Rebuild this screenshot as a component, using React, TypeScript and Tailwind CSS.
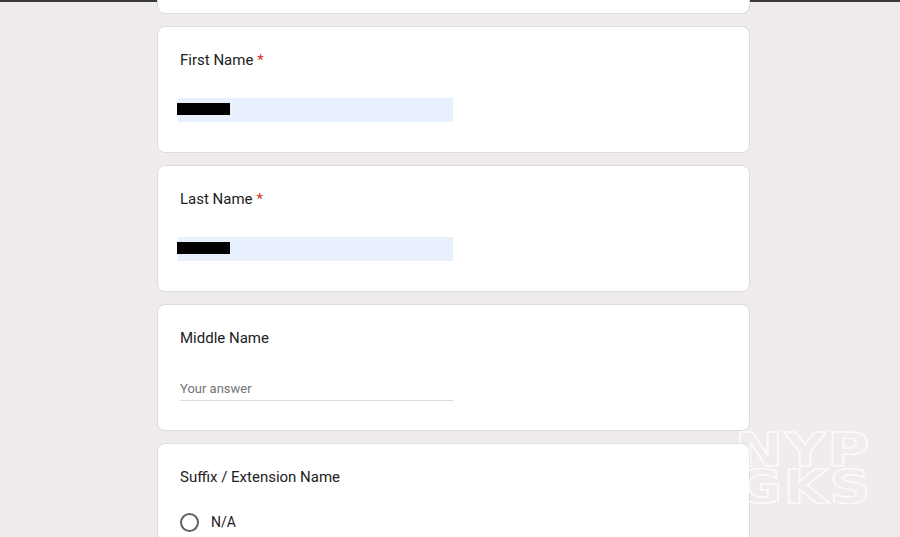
import React from "react";

const font = { fontFamily: "Roboto, 'Liberation Sans', sans-serif" };

function Card({ children, className = "" }: { children: React.ReactNode; className?: string }) {
  return (
    <div className={`w-[593px] rounded-[8px] border border-[#dadce0] bg-white pl-[22px] ${className}`}>
      {children}
    </div>
  );
}

function Title({ text, required }: { text: string; required?: boolean }) {
  return (
    <div className="text-[15px] leading-[20px] text-[#202124]">
      {text}
      {required && <span className="ml-[4px] text-[#d93025]">*</span>}
    </div>
  );
}

function FilledInput() {
  return (
    <div className="relative ml-[-2px] h-[24px] w-[275px] bg-[#e8f0fe]">
      <div className="absolute left-[-1px] top-[5px] h-[12px] w-[53px] bg-black" />
    </div>
  );
}

export default function App() {
  return (
    <div className="relative h-[537px] w-[900px] overflow-hidden bg-[#f0ebec]" style={font}>
      <div className="h-[2px] w-full bg-[#3a3a3a]" />
      <div className="flex flex-col items-start gap-[12px] pl-[157px]">
        <div className="mt-[-20px] h-[32px] w-[593px] rounded-[8px] border border-[#dadce0] bg-white" />
        <Card className="h-[127px] pt-[23px]">
          <Title text="First Name" required />
          <div className="mt-[28px]">
            <FilledInput />
          </div>
        </Card>
        <Card className="h-[127px] pt-[23px]">
          <Title text="Last Name" required />
          <div className="mt-[28px]">
            <FilledInput />
          </div>
        </Card>
        <Card className="h-[127px] pt-[23px]">
          <Title text="Middle Name" />
          <div className="mt-[32px] w-[273px] border-b border-[#dadce0] pb-[3px] text-[13px] leading-[17px] text-[#70757a]">
            Your answer
          </div>
        </Card>
        <Card className="h-[127px] pt-[23px]">
          <Title text="Suffix / Extension Name" />
          <div className="mt-[25px] flex items-center gap-[12px]">
            <div className="h-[19px] w-[19px] rounded-full border-2 border-[#5f6368]" />
            <span className="text-[14px] leading-[20px] text-[#202124]">N/A</span>
          </div>
        </Card>
      </div>
      <div
        className="absolute left-[735px] top-[432px] origin-left scale-x-[1.25] text-[46px] font-bold leading-[37px] tracking-[1px] text-transparent [-webkit-text-stroke:1.5px_rgba(255,255,255,0.75)]"
        style={{ fontFamily: "'DejaVu Sans', sans-serif" }}
      >
        NYP
        <br />
        GKS
      </div>
    </div>
  );
}
